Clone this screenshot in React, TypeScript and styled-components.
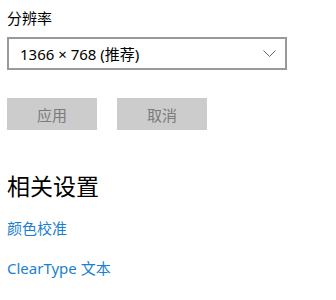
import React from "react";
import styled, { createGlobalStyle } from "styled-components";

const GlobalStyle = createGlobalStyle`
  html, body {
    margin: 0;
    padding: 0;
    background: #ffffff;
  }
  body {
    font-family: "Noto Sans", "Noto Sans CJK SC", sans-serif;
    color: #000000;
  }
`;

const Page = styled.div`
  width: 336px;
  height: 300px;
  box-sizing: border-box;
  padding: 8px 0 0 7px;
  display: flex;
  flex-direction: column;
`;

const Label = styled.div`
  font-size: 15px;
  line-height: 20px;
  height: 20px;
`;

const Select = styled.div`
  margin-top: 9px;
  width: 280px;
  height: 33px;
  box-sizing: border-box;
  border: 2px solid #999999;
  display: flex;
  align-items: center;
  justify-content: space-between;
  padding: 0 9px 0 11px;
  font-size: 15px;
`;

const Chevron = styled.svg`
  width: 13px;
  height: 7px;
`;

const ButtonRow = styled.div`
  margin-top: 28px;
  display: flex;
  gap: 20px;
`;

const Button = styled.div`
  width: 90px;
  height: 32px;
  background: #cccccc;
  color: #7a7a7a;
  font-size: 15px;
  display: flex;
  align-items: center;
  justify-content: center;
`;

const Heading = styled.div`
  margin-top: 41px;
  font-size: 23px;
  line-height: 30px;
`;

const Link = styled.div<{ $gap: number }>`
  margin-top: ${(p) => p.$gap}px;
  font-size: 15px;
  line-height: 20px;
  color: #1a7fd2;
`;

export default function App() {
  return (
    <>
      <GlobalStyle />
      <Page>
        <Label>分辨率</Label>
        <Select>
          <span>1366 × 768 (推荐)</span>
          <Chevron viewBox="0 0 13 7">
            <path d="M0.5 0.5 L6.5 6.5 L12.5 0.5" fill="none" stroke="#666" strokeWidth="1" />
          </Chevron>
        </Select>
        <ButtonRow>
          <Button>应用</Button>
          <Button>取消</Button>
        </ButtonRow>
        <Heading>相关设置</Heading>
        <Link $gap={17}>颜色校准</Link>
        <Link $gap={20}>ClearType 文本</Link>
      </Page>
    </>
  );
}
